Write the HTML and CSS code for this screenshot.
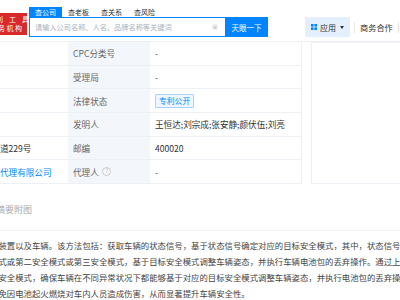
FILE: index.html
```html
<!DOCTYPE html>
<html lang="zh-CN">
<head>
    <meta charset="UTF-8">
    <meta name="viewport" content="width=device-width, initial-scale=1.0">
    <title>专利详情</title>
    <link rel="stylesheet" href="styles.css">
</head>
<body>
    <!-- 顶部搜索栏 -->
    <div class="header">
        <div class="logo">
            <span class="logo-line first">专利工具</span>
            <span class="logo-line">服务机构</span>
        </div>
        <div class="search">
            <div class="tabs">
                <span class="tab active">查公司</span>
                <span class="tab">查老板</span>
                <span class="tab">查关系</span>
                <span class="tab">查风险</span>
            </div>
            <div class="search-row">
                <div class="search-input">
                    <span>请输入公司名称、人名、品牌名称等关键词</span>
                    <span class="clear">×</span>
                </div>
                <div class="search-btn">天眼一下</div>
            </div>
        </div>
        <div class="app-btn">
            <svg class="app-icon" width="6" height="6" viewBox="0 0 6 6">
                <rect x="0" y="0" width="2.6" height="2.6" fill="#0084ff"/>
                <rect x="3.4" y="0" width="2.6" height="2.6" fill="#0084ff"/>
                <rect x="0" y="3.4" width="2.6" height="2.6" fill="#0084ff"/>
                <rect x="3.4" y="3.4" width="2.6" height="2.6" fill="#0084ff"/>
            </svg>
            <span>应用</span>
            <span class="caret"></span>
        </div>
        <span class="divider"></span>
        <span class="biz">商务合作</span>
        <span class="divider"></span>
    </div>

    <div class="main">
        <!-- 专利基本信息 -->
        <div class="detail">
            <div class="info-table">
                <div class="cell label">申请号</div>
                <div class="cell value">CN202311025863.2</div>
                <div class="cell label">CPC分类号</div>
                <div class="cell value">-</div>

                <div class="cell label">申请日</div>
                <div class="cell value">2023-08-15</div>
                <div class="cell label">受理局</div>
                <div class="cell value">-</div>

                <div class="cell label">公开日</div>
                <div class="cell value">2023-11-17</div>
                <div class="cell label">法律状态</div>
                <div class="cell value"><span class="tag">专利公开</span></div>

                <div class="cell label">公开号</div>
                <div class="cell value">CN117048502A</div>
                <div class="cell label">发明人</div>
                <div class="cell value">王恒达;刘宗成;张安静;颜伏伍;刘亮</div>

                <div class="cell label">地址</div>
                <div class="cell value">重庆市江北区建新东大道229号</div>
                <div class="cell label">邮编</div>
                <div class="cell value">400020</div>

                <div class="cell label">代理机构</div>
                <div class="cell value link">北京同立钧成知识产权代理有限公司</div>
                <div class="cell label">代理人 <span class="help">?</span></div>
                <div class="cell value">-</div>
            </div>
            <div class="side-panel"></div>
        </div>

        <!-- 摘要 -->
        <div class="abstract-head">
            <span class="abstract-title">摘要</span>
            <span class="abstract-sub">摘要附图</span>
        </div>
        <p class="abstract-text">本申请公开了一种电动车辆的安全控制方法、装置以及车辆。该方法包括：获取车辆的状态信号，基于状态信号确定对应的目标安全模式，其中，状态信号对应的目标安全模式包括：常规模式、第一安全模式或第二安全模式或第三安全模式，基于目标安全模式调整车辆姿态，并执行车辆电池包的丢弃操作。通过上述方案，能够根据状态信号确定第一、第二或第三安全模式，确保车辆在不同异常状况下都能够基于对应的目标安全模式调整车辆姿态，并执行电池包的丢弃操作，以便在电池热失控时及时丢弃电池包，有效避免因电池起火燃烧对车内人员造成伤害，从而显著提升车辆安全性。</p>
    </div>
</body>
</html>
```

FILE: styles.css
```css
html, body {
    overflow: hidden;
}
body {
    margin: 0;
    width: 400px;
    font-family: "Noto Sans CJK SC", "Noto Sans", sans-serif;
    background: #fff;
    color: #333;
}

/* 顶部搜索栏 */
.header {
    display: flex;
    height: 42px;
    box-sizing: border-box;
    padding-top: 7px;
    border-bottom: 1px solid #eef0f4;
}
.logo {
    margin-left: -17px;
    margin-top: 6px;
    width: 44px;
    height: 22px;
    box-sizing: border-box;
    padding: 2px 5px 0 0;
    background: #d8292b;
    color: #fff;
    font-size: 7px;
    line-height: 9px;
    text-align: right;
    white-space: nowrap;
}
.logo-line {
    display: block;
    letter-spacing: 1.5px;
    margin-right: -1.5px;
}
.logo-line.first {
    letter-spacing: 6px;
    margin-right: -6px;
}
.search {
    margin-left: 2px;
}
.tabs {
    display: flex;
    height: 10px;
}
.tab {
    font-size: 7px;
    line-height: 10px;
    padding: 0 6px;
    color: #333;
}
.tab.active {
    background: #0084ff;
    color: #fff;
}
.search-row {
    display: flex;
    height: 20px;
}
.search-input {
    width: 196px;
    box-sizing: border-box;
    border: 1px solid #0084ff;
    border-right: none;
    display: flex;
    align-items: center;
    justify-content: space-between;
    padding: 0 7px 0 5px;
    font-size: 7.2px;
    color: #a9b1bc;
}
.clear {
    width: 6px;
    height: 6px;
    border-radius: 50%;
    background: #ececec;
    color: #999;
    font-size: 5px;
    line-height: 6px;
    text-align: center;
}
.search-btn {
    width: 43px;
    background: #0084ff;
    color: #fff;
    font-size: 7.5px;
    display: flex;
    align-items: center;
    justify-content: center;
}
.app-btn {
    margin-left: 37px;
    margin-top: 10px;
    width: 45px;
    height: 20px;
    box-sizing: border-box;
    padding-left: 6px;
    background: #e4effd;
    display: flex;
    align-items: center;
    font-size: 8px;
    color: #333;
}
.app-icon {
    margin-right: 3px;
}
.caret {
    margin-left: 4px;
    width: 0;
    height: 0;
    border-top: 3px solid #333;
    border-left: 2.5px solid transparent;
    border-right: 2.5px solid transparent;
}
.divider {
    width: 1px;
    height: 11px;
    margin: 14.5px 0 0 4px;
    background: #e6e6e6;
}
.biz {
    margin: 10px 0 0 5px;
    line-height: 20px;
    font-size: 8.2px;
    color: #333;
    white-space: nowrap;
}
.biz + .divider {
    margin-left: 5px;
}

/* 专利信息表 */
.main {
    margin-left: -169px;
}
.detail {
    display: flex;
}
.info-table {
    display: grid;
    grid-template-columns: 78px 159px 82px 151px;
    border-right: 1px solid #edf1f6;
}
.cell {
    height: 23.7px;
    box-sizing: border-box;
    border-bottom: 1px solid #edf1f6;
    padding-left: 5px;
    display: flex;
    align-items: center;
    font-size: 8.6px;
    white-space: nowrap;
    overflow: hidden;
}
.label {
    background: #f3f7fc;
    color: #666;
}
.value {
    color: #333;
}
.link {
    color: #0084ff;
}
.tag {
    font-size: 7.8px;
    line-height: 12px;
    padding: 0 3px;
    color: #0084ff;
    background: #eef6ff;
    border: 1px solid #a9d0fa;
    border-radius: 1px;
}
.help {
    margin-left: 3.5px;
    width: 7px;
    height: 7px;
    border: 1px solid #c8ccd2;
    border-radius: 50%;
    font-size: 5.5px;
    line-height: 7px;
    text-align: center;
    color: #b0b5bb;
}
.side-panel {
    margin-left: 9px;
    flex: 1;
    min-width: 200px;
    border: 1px solid #edf1f6;
}

/* 摘要 */
.abstract-head {
    display: flex;
    padding: 20px 0 14px;
    border-bottom: 1px solid #eef0f3;
    font-size: 9px;
    line-height: 12px;
}
.abstract-title {
    width: 165px;
    color: #333;
}
.abstract-sub {
    color: #aaa;
}
.abstract-text {
    margin: 0;
    width: calc(70em + 1px);
    padding-top: 6px;
    font-size: 8.4px;
    line-height: 16px;
    color: #444;
}
```
